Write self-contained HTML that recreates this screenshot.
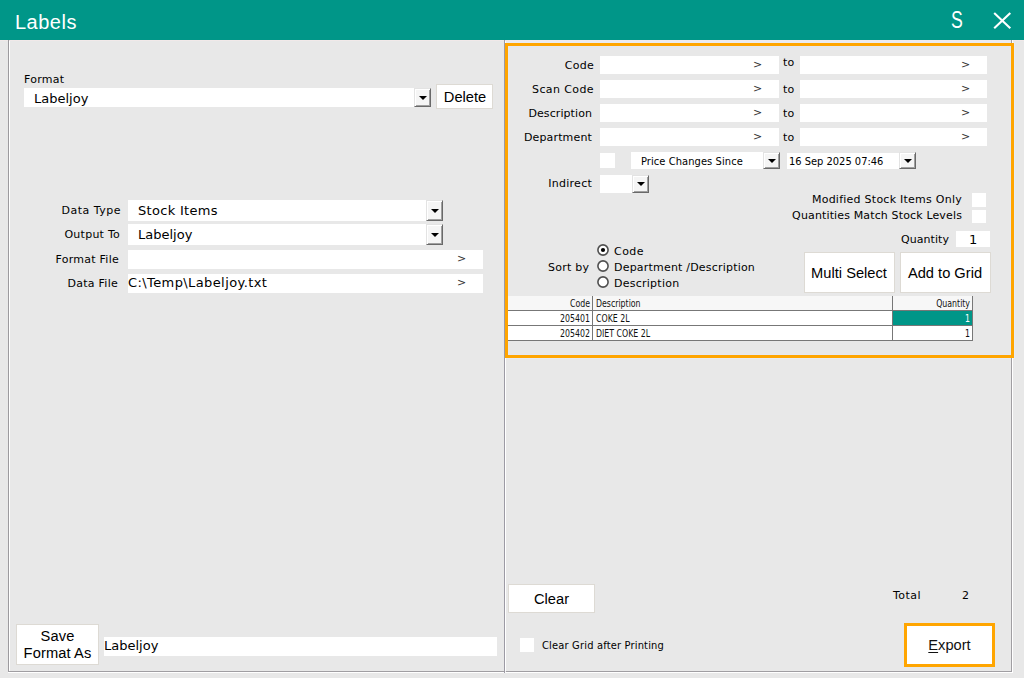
<!DOCTYPE html>
<html>
<head>
<meta charset="utf-8">
<title>Labels</title>
<style>
html,body{margin:0;padding:0;}
body{width:1024px;height:678px;overflow:hidden;background:#e8e8e8;position:relative;
  font-family:"DejaVu Sans","Liberation Sans",sans-serif;color:#000;}
.abs{position:absolute;}
#titlebar{left:0;top:0;width:1024px;height:40px;background:#009688;}
#title{left:15px;top:10px;font-family:"Liberation Sans",sans-serif;font-size:20px;line-height:24px;color:#fff;letter-spacing:0.5px;}
#tS{left:951px;top:6px;font-family:"Liberation Sans",sans-serif;font-size:23px;line-height:28px;color:#fff;transform:scaleX(0.77);transform-origin:0 0;}
.lbl{font-size:11px;line-height:14px;white-space:nowrap;letter-spacing:0.25px;}
.r{text-align:right;}
.fld{background:#fff;}
.val{font-size:13px;line-height:18px;white-space:nowrap;letter-spacing:0.2px;}
.gt{font-size:11px;line-height:18px;color:#333;}
.dd{background:#f5f5f5;border-top:1px solid #e3e3e3;border-left:1px solid #e3e3e3;border-right:1px solid #696969;border-bottom:1px solid #696969;box-shadow:inset 1px 1px 0 #fff, inset -1px -1px 0 #a0a0a0;box-sizing:border-box;}
.dd:after{content:"";position:absolute;left:50%;top:50%;margin-left:-4px;margin-top:-2px;border-left:4px solid transparent;border-right:4px solid transparent;border-top:4px solid #000;}
.btn{background:#fff;border:1px solid #dddad4;box-sizing:border-box;font-family:"Liberation Sans",sans-serif;font-size:14.67px;color:#000;text-align:center;}
.seg{color:#000;font-family:"DejaVu Sans Condensed","DejaVu Sans","Liberation Sans",sans-serif;font-stretch:condensed;font-size:11px;line-height:16px;white-space:nowrap;}
.vline{width:1px;}
.hline{height:1px;}
.grid{font-family:"DejaVu Sans Condensed","DejaVu Sans","Liberation Sans",sans-serif;font-stretch:condensed;font-size:10px;line-height:14px;white-space:nowrap;color:#111;transform:scaleX(0.87);transform-origin:0 0;}
.grid.r{transform-origin:100% 0;}
.radio{width:12px;height:12px;box-sizing:border-box;border:2px solid #5c5c5c;border-radius:50%;background:#fff;}
</style>
</head>
<body>
<!-- title bar -->
<div id="titlebar" class="abs"></div>
<div id="title" class="abs">Labels</div>
<div id="tS" class="abs">S</div>
<svg class="abs" style="left:992px;top:11px" width="20" height="19" viewBox="0 0 20 19"><path d="M2.2 2 L18.3 17.2 M18.3 2 L2.2 17.2" stroke="#fff" stroke-width="2.1" fill="none"/></svg>

<!-- panel borders -->
<div class="abs" style="left:504px;top:42px;width:511px;height:317px;background:#e8ebf2;"></div>
<div class="abs" style="left:508px;top:46px;width:503px;height:309px;background:#e8e8e8;"></div>
<div class="abs hline" style="left:0px;top:40px;width:1024px;height:1px;background:#f1e9e9"></div>
<div class="abs" style="left:506px;top:41px;width:505px;height:2px;background:#e9ebf1"></div>
<div class="abs vline" style="left:8px;top:40px;height:633px;background:#9c9a9e"></div>
<div class="abs vline" style="left:9px;top:41px;height:630px;background:#fff"></div>
<div class="abs hline" style="left:8px;top:671px;width:497px;background:#a09ea2"></div>
<div class="abs hline" style="left:8px;top:672px;width:497px;background:#fff"></div>
<div class="abs vline" style="left:504px;top:40px;height:633px;background:#9c9aa4"></div>
<div class="abs vline" style="left:505px;top:41px;height:630px;background:#fff"></div>
<div class="abs hline" style="left:506px;top:671px;width:506px;background:#a09ea2"></div>
<div class="abs hline" style="left:505px;top:672px;width:508px;background:#fff"></div>
<div class="abs vline" style="left:1011px;top:40px;height:632px;background:#a09ea2"></div>
<div class="abs vline" style="left:1012px;top:40px;height:633px;background:#fff"></div>

<!-- orange focus rect -->
<div class="abs" style="left:505px;top:43px;width:509px;height:315px;box-sizing:border-box;border:3px solid #ffa500;box-shadow:inset 0 0 0 1px #e5e8f1;"></div>

<!-- LEFT PANEL -->
<div class="abs lbl" style="left:24px;top:73px;">Format</div>
<div class="abs fld" style="left:24px;top:88px;width:390px;height:19px;"></div>
<div class="abs val" style="left:34px;top:90px;letter-spacing:0;">Labeljoy</div>
<div class="abs dd" style="left:414px;top:88px;width:17px;height:19px;"></div>
<div class="abs btn" style="left:436px;top:84px;width:57px;height:25px;line-height:24px;padding-left:1px;">Delete</div>

<div class="abs lbl r" style="left:21px;width:100px;top:204px;letter-spacing:0.5px;">Data Type</div>
<div class="abs fld" style="left:128px;top:200px;width:298px;height:21px;"></div>
<div class="abs val" style="left:138px;top:202px;letter-spacing:0.3px;">Stock Items</div>
<div class="abs dd" style="left:426px;top:200px;width:17px;height:21px;"></div>

<div class="abs lbl r" style="left:20px;width:100px;top:228px;">Output To</div>
<div class="abs fld" style="left:128px;top:224px;width:298px;height:21px;"></div>
<div class="abs val" style="left:138px;top:226px;letter-spacing:0;">Labeljoy</div>
<div class="abs dd" style="left:426px;top:224px;width:17px;height:21px;"></div>

<div class="abs lbl r" style="left:19px;width:100px;top:253px;">Format File</div>
<div class="abs fld" style="left:128px;top:250px;width:355px;height:19px;"></div>
<div class="abs gt" style="left:457px;top:250px;">&gt;</div>

<div class="abs lbl r" style="left:18px;width:100px;top:277px;">Data File</div>
<div class="abs fld" style="left:128px;top:274px;width:355px;height:19px;"></div>
<div class="abs val" style="left:128px;top:274px;letter-spacing:0.4px;">C:\Temp\Labeljoy.txt</div>
<div class="abs gt" style="left:457px;top:274px;">&gt;</div>

<div class="abs btn" style="left:16px;top:624px;width:83px;height:41px;line-height:17px;padding-top:3px;letter-spacing:0.12px;">Save<br>Format As</div>
<div class="abs fld" style="left:104px;top:637px;width:393px;height:19px;"></div>
<div class="abs val" style="left:104px;top:637px;letter-spacing:0;">Labeljoy</div>

<!-- RIGHT PANEL -->
<div class="abs lbl r" style="left:510px;width:84px;top:59px;">Code</div>
<div class="abs lbl r" style="left:510px;width:84px;top:83px;letter-spacing:0.4px;">Scan Code</div>
<div class="abs lbl r" style="left:510px;width:82px;top:107px;letter-spacing:0.08px;">Description</div>
<div class="abs lbl r" style="left:510px;width:82px;top:131px;letter-spacing:0.15px;">Department</div>

<div class="abs fld" style="left:600px;top:56px;width:179px;height:18px;"></div>
<div class="abs fld" style="left:600px;top:80px;width:179px;height:18px;"></div>
<div class="abs fld" style="left:600px;top:104px;width:179px;height:18px;"></div>
<div class="abs fld" style="left:600px;top:128px;width:179px;height:18px;"></div>
<div class="abs gt" style="left:753px;top:56px;">&gt;</div>
<div class="abs gt" style="left:753px;top:80px;">&gt;</div>
<div class="abs gt" style="left:753px;top:104px;">&gt;</div>
<div class="abs gt" style="left:753px;top:128px;">&gt;</div>

<div class="abs lbl" style="left:783px;top:56px;">to</div>
<div class="abs lbl" style="left:783px;top:83px;">to</div>
<div class="abs lbl" style="left:783px;top:107px;">to</div>
<div class="abs lbl" style="left:783px;top:131px;">to</div>

<div class="abs fld" style="left:800px;top:56px;width:187px;height:18px;"></div>
<div class="abs fld" style="left:800px;top:80px;width:187px;height:18px;"></div>
<div class="abs fld" style="left:800px;top:104px;width:187px;height:18px;"></div>
<div class="abs fld" style="left:800px;top:128px;width:187px;height:18px;"></div>
<div class="abs gt" style="left:961px;top:56px;">&gt;</div>
<div class="abs gt" style="left:961px;top:80px;">&gt;</div>
<div class="abs gt" style="left:961px;top:104px;">&gt;</div>
<div class="abs gt" style="left:961px;top:128px;">&gt;</div>

<div class="abs fld" style="left:600px;top:153px;width:15px;height:15px;"></div>
<div class="abs fld" style="left:631px;top:152px;width:132px;height:17px;"></div>
<div class="abs seg" style="left:641px;top:154px;letter-spacing:0.08px;">Price Changes Since</div>
<div class="abs dd" style="left:763px;top:152px;width:17px;height:17px;"></div>
<div class="abs fld" style="left:787px;top:153px;width:112px;height:16px;"></div>
<div class="abs seg" style="left:789px;top:154px;">16 Sep 2025 07:46</div>
<div class="abs dd" style="left:899px;top:152px;width:17px;height:17px;"></div>

<div class="abs lbl r" style="left:510px;width:82px;top:177px;">Indirect</div>
<div class="abs fld" style="left:600px;top:175px;width:32px;height:18px;"></div>
<div class="abs dd" style="left:632px;top:175px;width:17px;height:18px;"></div>

<div class="abs lbl r" style="left:762px;width:200px;top:193px;">Modified Stock Items Only</div>
<div class="abs fld" style="left:972px;top:193px;width:14px;height:14px;"></div>
<div class="abs lbl r" style="left:762px;width:200px;top:209px;letter-spacing:0.14px;">Quantities Match Stock Levels</div>
<div class="abs fld" style="left:972px;top:210px;width:14px;height:13px;"></div>

<div class="abs lbl r" style="left:849px;width:100px;top:233px;letter-spacing:0.05px;">Quantity</div>
<div class="abs fld" style="left:956px;top:231px;width:34px;height:16px;"></div>
<div class="abs val" style="left:969px;top:231px;">1</div>

<svg class="abs" style="left:597px;top:244px" width="12" height="12" viewBox="0 0 12 12"><circle cx="6" cy="6" r="5.1" fill="#fff" stroke="#505050" stroke-width="1.6"/><circle cx="6" cy="6" r="2.1" fill="#000"/></svg>
<svg class="abs" style="left:597px;top:260px" width="12" height="12" viewBox="0 0 12 12"><circle cx="6" cy="6" r="5.1" fill="#fff" stroke="#505050" stroke-width="1.6"/></svg>
<svg class="abs" style="left:597px;top:276px" width="12" height="12" viewBox="0 0 12 12"><circle cx="6" cy="6" r="5.1" fill="#fff" stroke="#505050" stroke-width="1.6"/></svg>
<div class="abs lbl" style="left:614px;top:245px;letter-spacing:0.45px;">Code</div>
<div class="abs lbl" style="left:614px;top:261px;letter-spacing:0.2px;">Department /Description</div>
<div class="abs lbl" style="left:614px;top:277px;">Description</div>
<div class="abs lbl" style="left:548px;top:261px;">Sort by</div>

<div class="abs btn" style="left:804px;top:252px;width:91px;height:41px;line-height:40px;padding-right:1px;">Multi Select</div>
<div class="abs btn" style="left:900px;top:252px;width:91px;height:41px;line-height:40px;padding-right:1px;">Add to Grid</div>

<!-- grid -->
<div class="abs" style="left:508px;top:296px;width:464px;height:14px;background:#f7f7f7"></div>
<div class="abs fld" style="left:508px;top:311px;width:464px;height:29px;"></div>
<div class="abs" style="left:893px;top:311px;width:79px;height:14px;background:#009688"></div>
<div class="abs hline" style="left:508px;top:310px;width:465px;background:#777"></div>
<div class="abs hline" style="left:508px;top:325px;width:465px;background:#777"></div>
<div class="abs hline" style="left:508px;top:340px;width:465px;background:#777"></div>
<div class="abs vline" style="left:592px;top:296px;height:45px;background:#777"></div>
<div class="abs vline" style="left:892px;top:296px;height:45px;background:#777"></div>
<div class="abs vline" style="left:972px;top:296px;height:45px;background:#777"></div>
<div class="abs grid r" style="left:508px;width:82px;top:297px;">Code</div>
<div class="abs grid" style="left:596px;top:297px;">Description</div>
<div class="abs grid r" style="left:893px;width:77px;top:297px;">Quantity</div>
<div class="abs grid r" style="left:508px;width:82px;top:312px;">205401</div>
<div class="abs grid" style="left:596px;top:312px;">COKE 2L</div>
<div class="abs grid r" style="left:893px;width:77px;top:312px;color:#fff;">1</div>
<div class="abs grid r" style="left:508px;width:82px;top:327px;">205402</div>
<div class="abs grid" style="left:596px;top:327px;">DIET COKE 2L</div>
<div class="abs grid r" style="left:893px;width:77px;top:327px;">1</div>

<!-- bottom right -->
<div class="abs btn" style="left:508px;top:584px;width:87px;height:29px;line-height:28px;">Clear</div>
<div class="abs fld" style="left:520px;top:638px;width:14px;height:14px;"></div>
<div class="abs seg" style="left:542px;top:638px;letter-spacing:0.18px;">Clear Grid after Printing</div>
<div class="abs lbl" style="left:893px;top:589px;letter-spacing:0.45px;">Total</div>
<div class="abs lbl" style="left:962px;top:589px;">2</div>
<div class="abs" style="left:904px;top:623px;width:91px;height:44px;box-sizing:border-box;border:3px solid #ffa500;background:#fff;font-family:'Liberation Sans',sans-serif;font-size:14.67px;line-height:38px;text-align:center;color:#111;"><span style="text-decoration:underline;text-underline-offset:2px;">E</span>xport</div>
</body>
</html>
